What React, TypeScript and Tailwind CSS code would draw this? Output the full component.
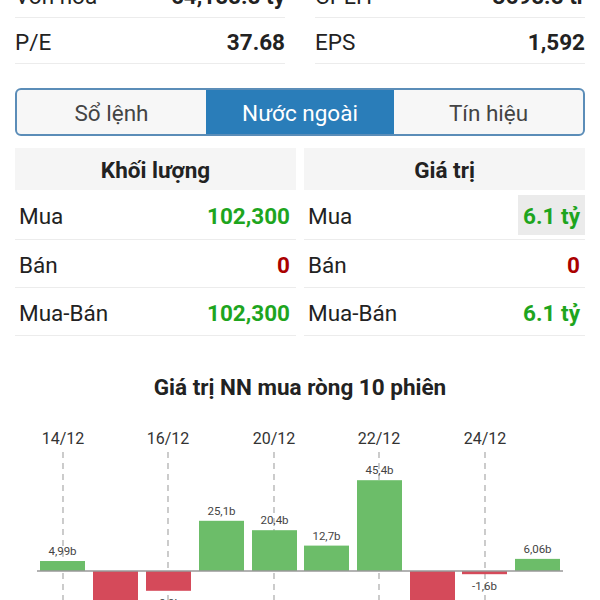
import React from "react";

const bars = [
  { x: 40, v: 4.99, label: "4,99b" },
  { x: 93, v: -22, label: "-22b" },
  { x: 146, v: -9.9, label: "-9,9b" },
  { x: 199, v: 25.1, label: "25,1b" },
  { x: 252, v: 20.4, label: "20,4b" },
  { x: 304, v: 12.7, label: "12,7b" },
  { x: 357, v: 45.4, label: "45,4b" },
  { x: 410, v: -30, label: "-30b" },
  { x: 462, v: -1.6, label: "-1,6b" },
  { x: 515, v: 6.06, label: "6,06b" },
];

const dates = [
  { x: 63, t: "14/12" },
  { x: 168, t: "16/12" },
  { x: 274, t: "20/12" },
  { x: 379, t: "22/12" },
  { x: 485, t: "24/12" },
];

function StatRow({ label, value }: { label: string; value: string }) {
  return (
    <div className="flex h-[46px] items-center justify-between border-b border-[#ececec] pt-[4px]">
      <span className="text-[22.5px] text-[#222]">{label}</span>
      <span className="text-[22.5px] font-bold text-[#222]">{value}</span>
    </div>
  );
}

function TRow({
  label,
  value,
  color,
  hl,
  pr,
  h,
}: {
  label: string;
  value: string;
  color: string;
  hl?: boolean;
  pr: string;
  h: string;
}) {
  return (
    <div className={`flex ${h} items-center justify-between border-b border-[#ececec]`}>
      <span className="pl-[4px] pt-[4px] text-[22.5px] text-[#222]">{label}</span>
      <span
        className={`flex h-[40px] items-center pt-[4px] text-[22.5px] font-bold ${pr} ${hl ? "bg-[#ebebeb]" : ""}`}
        style={{ color }}
      >
        {value}
      </span>
    </div>
  );
}

export default function App() {
  const base = 165;
  const k = 2;
  return (
    <div
      className="h-[600px] w-[600px] overflow-hidden bg-white"
      style={{ fontFamily: "Roboto, 'Noto Sans', sans-serif" }}
    >
      <div className="-mt-[28px] grid grid-cols-2 gap-[30px] px-[15px]">
        <div>
          <StatRow label="Vốn hóa" value="64,155.5 tỷ" />
          <StatRow label="P/E" value="37.68" />
        </div>
        <div>
          <StatRow label="CPLH" value="3695.5 tr" />
          <StatRow label="EPS" value="1,592" />
        </div>
      </div>

      <div className="mx-[15px] mt-[24px] flex h-[48px] overflow-hidden rounded-[6px] border-2 border-[#5b8db8] bg-[#f7f7f7]">
        <div className="flex flex-1 items-center justify-center pt-[3px] text-[22.5px] text-[#444]">Sổ lệnh</div>
        <div className="flex w-[188px] items-center justify-center bg-[#2a7db9] pt-[3px] text-[22.5px] text-white">
          Nước ngoài
        </div>
        <div className="flex flex-1 items-center justify-center pt-[3px] text-[22.5px] text-[#444]">Tín hiệu</div>
      </div>

      <div className="mx-[15px] mt-[12px] grid grid-cols-2 gap-[8px]">
        <div>
          <div className="flex h-[42px] items-center justify-center bg-[#f5f5f5] pt-[4px] text-[22.5px] font-bold text-[#222]">
            Khối lượng
          </div>
          <TRow label="Mua" value="102,300" color="#1ea51e" pr="pr-[6px]" h="h-[50px]" />
          <TRow label="Bán" value="0" color="#aa0000" pr="pr-[6px]" h="h-[48px]" />
          <TRow label="Mua-Bán" value="102,300" color="#1ea51e" pr="pr-[6px]" h="h-[48px]" />
        </div>
        <div>
          <div className="flex h-[42px] items-center justify-center bg-[#f5f5f5] pt-[4px] text-[22.5px] font-bold text-[#222]">
            Giá trị
          </div>
          <TRow label="Mua" value="6.1 tỷ" color="#1ea51e" hl pr="px-[5px]" h="h-[50px]" />
          <TRow label="Bán" value="0" color="#aa0000" pr="pr-[5px]" h="h-[48px]" />
          <TRow label="Mua-Bán" value="6.1 tỷ" color="#1ea51e" pr="pr-[5px]" h="h-[48px]" />
        </div>
      </div>

      <div className="mt-[30px] flex h-[40px] items-center justify-center pt-[4px] text-[22.5px] font-bold text-[#222]">
        Giá trị NN mua ròng 10 phiên
      </div>

      <svg width="600" height="200" viewBox="0 0 600 200" className="block">
        {dates.map((d) => (
          <g key={d.t}>
            <text
              x={d.x}
              y={38}
              textAnchor="middle"
              fontSize="16"
              fill="#333"
              fontFamily="Roboto, sans-serif"
            >
              {d.t}
            </text>
            <line x1={d.x} y1={46} x2={d.x} y2={200} stroke="#aaa" strokeWidth="1.2" strokeDasharray="6 5" />
          </g>
        ))}
        {bars.map((b) => {
          const h = Math.abs(b.v) * k;
          const pos = b.v >= 0;
          const y = pos ? base - h : base;
          return (
            <g key={b.x}>
              <rect x={b.x} y={y} width={45} height={h} fill={pos ? "#6cbd69" : "#d54a5a"} />
              <text
                x={b.x + 22.5}
                y={pos ? y - 6 : base + h + 16}
                textAnchor="middle"
                fontSize="11.5"
                fill="#444"
                fontFamily="Roboto, sans-serif"
              >
                {b.label}
              </text>
            </g>
          );
        })}
        <line x1={37} y1={base} x2={563} y2={base} stroke="#999" strokeWidth="1.5" />
      </svg>
    </div>
  );
}
